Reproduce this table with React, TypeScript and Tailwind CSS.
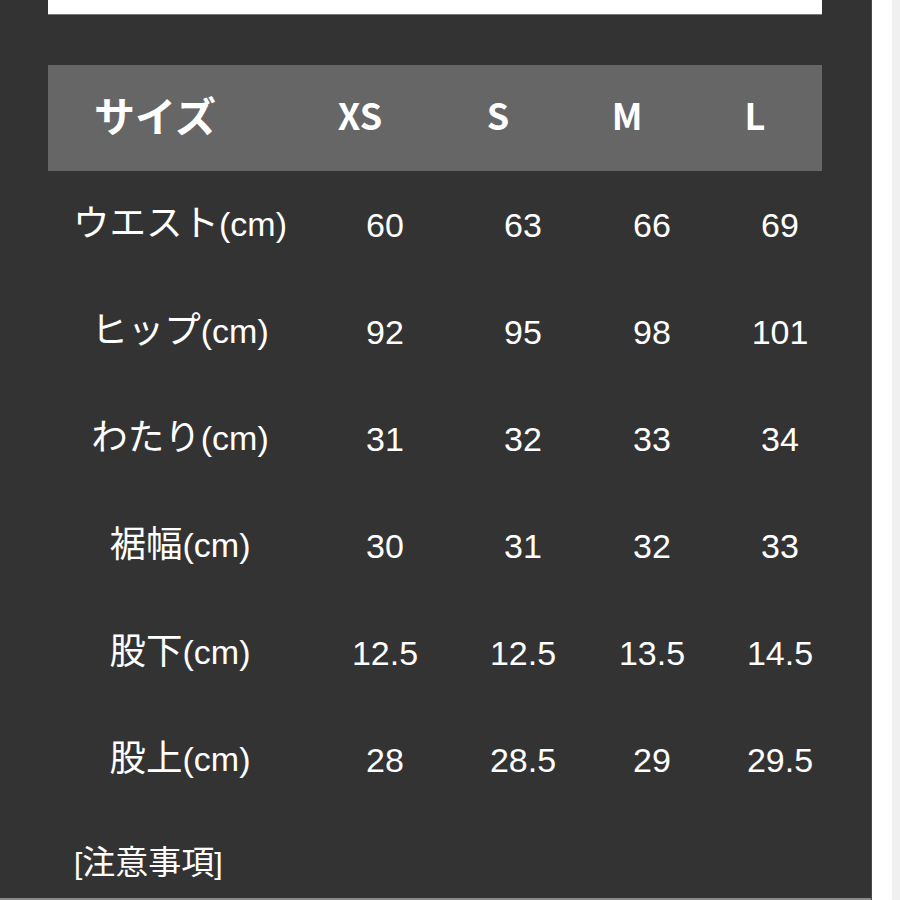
const headers = ['サイズ', 'XS', 'S', 'M', 'L']

const rows: [string, string, string, string, string][] = [
  ['ウエスト', '60', '63', '66', '69'],
  ['ヒップ', '92', '95', '98', '101'],
  ['わたり', '31', '32', '33', '34'],
  ['裾幅', '30', '31', '32', '33'],
  ['股下', '12.5', '12.5', '13.5', '14.5'],
  ['股上', '28', '28.5', '29', '29.5'],
]

const cols = 'grid grid-cols-[264px_146px_130px_128px_128px]'

export default function App() {
  return (
    <div className="flex w-[900px] h-[900px] overflow-hidden">
      <div className="w-[872px] h-full bg-[#333333] border-r border-[#4a4a4a] flex flex-col">
        <div className="ml-[48px] w-[774px] h-[15px] bg-white border-b border-[#777]" />

        <div className="ml-[48px] mt-[50px] w-[774px] h-[106px] bg-[#666666] overflow-hidden">
          <div
            className={`${cols} h-full items-center pb-[8px] -ml-[25px] text-white font-bold text-[36px] [font-family:'Noto_Sans_CJK_JP',sans-serif]`}>
            {headers.map((h, i) => (
              <div
                className={i === 0 ? 'text-center leading-none text-[41px]' : 'text-center leading-none'}
                key={h}>
                {h}
              </div>
            ))}
          </div>
        </div>

        <div className="ml-[48px] text-white text-[34px] [font-family:'Liberation_Sans','Noto_Sans_CJK_JP',sans-serif]">
          {rows.map(row => (
            <div className={`${cols} h-[107px] items-center`} key={row[0]}>
              <div className="text-center leading-none">
                <span className="text-[36.5px]">{row[0]}</span>(cm)
              </div>
              {row.slice(1).map((cell, i) => (
                <div className="text-center leading-none" key={i}>
                  {cell}
                </div>
              ))}
            </div>
          ))}
        </div>

        <div className="ml-[74px] mt-[32px] text-white text-[30px] leading-[36px] [font-family:'Liberation_Sans','Noto_Sans_CJK_JP',sans-serif]">
          [<span className="text-[33px]">注意事項</span>]
        </div>

        <div className="mt-auto h-[2px] bg-[#8a8a8a]" />
      </div>
      <div className="w-[20px] h-full bg-white" />
      <div className="flex-1 h-full bg-[#f0f0f0]" />
    </div>
  )
}
